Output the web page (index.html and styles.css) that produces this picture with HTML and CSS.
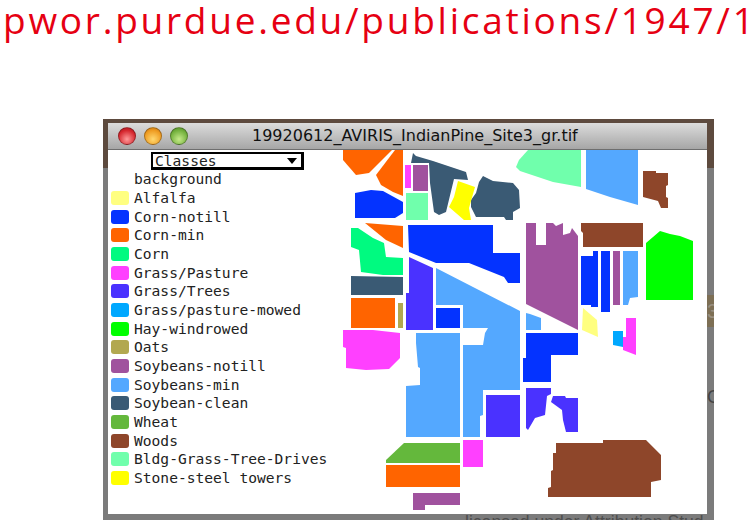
FILE: index.html
```html
<!DOCTYPE html>
<html lang="en">
<head>
<meta charset="utf-8">
<title>19920612_AVIRIS_IndianPine_Site3_gr.tif</title>
<link rel="stylesheet" href="styles.css">
</head>
<body>
<header class="note"><span class="note-text">pwor.purdue.edu/publications/1947/1</span></header>
<section class="screen">
  <span class="ghost-patch">3)</span>
  <span class="ghost-letter">C</span>
  <div class="window">
    <div class="titlebar">
      <div class="lights">
        <span class="light light-red"></span>
        <span class="light light-amber"></span>
        <span class="light light-green"></span>
      </div>
      <div class="title">19920612_AVIRIS_IndianPine_Site3_gr.tif</div>
    </div>
    <div class="content">
      <div class="legend">
        <div class="select"><span>Classes</span><span class="caret"></span></div>
        <div class="row"><span class="swatch"></span>background</div>
        <div class="row"><span class="swatch c-alfalfa"></span>Alfalfa</div>
        <div class="row"><span class="swatch c-notill"></span>Corn-notill</div>
        <div class="row"><span class="swatch c-cornmin"></span>Corn-min</div>
        <div class="row"><span class="swatch c-corn"></span>Corn</div>
        <div class="row"><span class="swatch c-pasture"></span>Grass/Pasture</div>
        <div class="row"><span class="swatch c-trees"></span>Grass/Trees</div>
        <div class="row"><span class="swatch c-mowed"></span>Grass/pasture-mowed</div>
        <div class="row"><span class="swatch c-hay"></span>Hay-windrowed</div>
        <div class="row"><span class="swatch c-oats"></span>Oats</div>
        <div class="row"><span class="swatch c-soynotill"></span>Soybeans-notill</div>
        <div class="row"><span class="swatch c-soymin"></span>Soybeans-min</div>
        <div class="row"><span class="swatch c-soyclean"></span>Soybean-clean</div>
        <div class="row"><span class="swatch c-wheat"></span>Wheat</div>
        <div class="row"><span class="swatch c-woods"></span>Woods</div>
        <div class="row"><span class="swatch c-bldg"></span>Bldg-Grass-Tree-Drives</div>
        <div class="row"><span class="swatch c-stone"></span>Stone-steel towers</div>
      </div>
      <svg class="map" viewBox="340 150 367 364" width="367" height="364" aria-label="Indian Pines class map">
        <g class="f-cornmin">
          <polygon points="343,150 392,150 369,173 356,175 343,160"/>
          <polygon points="395,150 403,150 403,196 393,192 381,185 376,175"/>
          <polygon points="365,223 403,226 403,248 386,240"/>
          <polygon points="351,298 395,298 395,328 351,328"/>
          <polygon points="386,465 460,465 460,487 386,487"/>
        </g>
        <g class="f-pasture">
          <polygon points="405,165 411,165 411,188 405,188"/>
          <polygon points="343,330 373,330 400,333 400,358 389,369 366,370 346,368 346,348 343,347"/>
          <polygon points="463,440 483,440 483,467 463,467"/>
          <polygon points="626,318 636,318 636,355 623,350 623,337 626,337"/>
        </g>
        <g class="f-soynotill">
          <polygon points="413,165 428,165 428,191 413,191"/>
          <polygon points="413,493 460,493 460,505 425,505 425,510 413,510"/>
          <polygon points="526,223 536,223 536,245 546,245 546,223 553,223 556,226 563,223 563,235 570,233 572,228 578,236 578,330 526,304"/>
          <polygon points="613,251 620,251 620,305 613,305"/>
        </g>
        <g class="f-bldg">
          <polygon points="406,193 428,193 428,220 406,220"/>
          <polygon points="528,150 581,150 581,187 553,182 520,171 516,167 519,160"/>
        </g>
        <g class="f-notill">
          <polygon points="355,193 371,190 383,191 403,202 403,213 395,218 355,218"/>
          <polygon points="408,225 493,225 493,253 520,253 520,283 508,283 504,277 469,263 436,263 409,252"/>
          <polygon points="436,308 460,308 460,328 436,328"/>
          <polygon points="526,333 578,333 578,355 551,355 551,382 523,382 523,358 526,358"/>
          <polygon points="581,256 593,256 593,251 598,251 598,307 591,307 591,305 581,305"/>
          <polygon points="601,251 610,251 610,312 601,312"/>
        </g>
        <g class="f-soyclean">
          <polygon points="413,153 416,156 433,161 466,172 468,180 454,179 446,212 439,215 434,212 430,183 429,163 411,163"/>
          <polygon points="483,176 493,181 513,183 519,190 520,208 513,212 513,220 506,220 504,217 476,217 471,207 471,200 476,193 479,182"/>
          <polygon points="351,276 403,277 403,295 351,295"/>
        </g>
        <polygon class="f-stone" points="458,181 475,187 469,208 471,220 464,220 449,207 454,197"/>
        <polygon class="f-corn" points="351,228 358,228 373,238 384,243 386,257 403,258 403,275 383,275 361,272 359,250 351,247"/>
        <polygon class="f-oats" points="398,303 403,303 403,328 398,328"/>
        <g class="f-trees">
          <polygon points="409,257 433,268 433,330 406,330 406,293 409,293"/>
          <polygon points="486,395 520,395 520,437 486,437"/>
          <polygon points="526,388 551,388 551,394 547,396 545,415 535,418 528,430 526,428"/>
          <polygon points="553,396 565,396 566,398 578,398 578,432 566,432 563,420 562,410 551,402"/>
        </g>
        <g class="f-soymin">
          <polygon points="436,268 520,311 520,390 483,390 483,415 480,416 480,437 463,437 463,345 483,345 485,333 488,328 463,328 463,305 436,305"/>
          <polygon points="416,333 460,333 460,437 406,437 406,386 420,385 420,368 418,367 416,343"/>
          <polygon points="586,150 638,150 638,205 610,197 586,189"/>
          <polygon points="623,251 638,251 638,297 630,298 628,305 623,305"/>
          <polygon points="526,313 530,314 541,318 541,330 526,330"/>
        </g>
        <polygon class="f-wheat" points="404,443 460,443 460,463 386,463 386,460"/>
        <g class="f-woods">
          <polygon points="643,171 656,171 656,173 668,173 668,185 666,186 666,197 668,198 668,208 661,208 658,201 643,197"/>
          <polygon points="581,223 643,223 643,247 583,247 583,233 581,231"/>
          <polygon points="556,443 603,443 603,440 646,440 661,455 661,480 651,482 651,497 548,497 548,488 551,487 551,471 553,470 553,453 556,453"/>
        </g>
        <polygon class="f-hay" points="646,243 660,231 670,234 680,236 693,241 693,300 646,300"/>
        <polygon class="f-alfalfa" points="583,308 597,320 598,337 582,330"/>
        <polygon class="f-mowed" points="613,331 623,331 623,347 613,345"/>
      </svg>
    </div>
  </div>
  <div class="credit">licensed under Attribution Stud</div>
</section>
</body>
</html>
```
FILE: styles.css
```css
* { box-sizing: border-box; }
html, body { margin: 0; padding: 0; }
body { width: 756px; height: 520px; overflow: hidden; background: #fff; font-family: "DejaVu Sans Mono", monospace; }

.note { height: 119px; overflow: hidden; white-space: nowrap; padding-left: 3px; }
.note-text { display: block; font-family: "Open Sans", sans-serif; font-weight: 400; font-size: 37px; line-height: 40px; letter-spacing: 2.75px; color: #e60012; }

.screen { position: relative; width: 611px; height: 401px; margin-left: 103px; padding: 4px 7px 0 5px; background: linear-gradient(#5d4a3e 0, #5d4a3e 49px, #7b7b7b 49px); }
.ghost-patch { position: absolute; left: 604px; top: 176px; width: 7px; height: 32px; overflow: hidden; background: #7d6f55; color: #9a9080; font: 20px/32px "Liberation Sans", sans-serif; }
.ghost-letter { position: absolute; left: 604px; top: 267px; width: 7px; overflow: hidden; color: #444; font: 18px/22px "Liberation Sans", sans-serif; }

.window { width: 599px; }
.titlebar { display: flex; align-items: center; height: 27px; position: relative; background: linear-gradient(#dcdcdc, #a6a6a6); border-bottom: 1px solid #6e6e6e; }
.lights { display: flex; gap: 8px; padding-left: 10px; }
.light { width: 18px; height: 18px; border-radius: 50%; border: 1px solid rgba(0,0,0,.3); }
.light-red { background: radial-gradient(circle at 50% 70%, #ff9a9a, #d4252c 65%, #a01a20); }
.light-amber { background: radial-gradient(circle at 50% 70%, #ffd870, #ee9a20 65%, #b86c10); }
.light-green { background: radial-gradient(circle at 50% 70%, #c6ea8a, #72b03c 65%, #4c8024); }
.title { margin-left: 64px; font: 16px/20px "DejaVu Sans", sans-serif; color: #111; white-space: nowrap; }

.content { display: flex; height: 364px; background: #fff; }
.legend { width: 232px; padding: 2px 0 0 3px; font-size: 14.6px; color: #222; white-space: nowrap; }
.select { display: flex; justify-content: space-between; align-items: center; width: 153px; height: 18px; margin-left: 40px; padding: 0 4px 0 2px; background: #fff; border: 2px solid #000; border-right-width: 3px; border-bottom-width: 3px; line-height: 14px; }
.caret { width: 0; height: 0; border-left: 5.5px solid transparent; border-right: 5.5px solid transparent; border-top: 6px solid #000; }
.row { display: flex; align-items: center; gap: 5px; height: 18.67px; line-height: 18px; }
.swatch { width: 18px; height: 14px; border-radius: 3px; flex: none; }
.map { display: block; flex: none; }

.c-alfalfa, .f-alfalfa { background: #ffff80; fill: #ffff80; }
.c-notill, .f-notill { background: #0433ff; fill: #0433ff; }
.c-cornmin, .f-cornmin { background: #ff6400; fill: #ff6400; }
.c-corn, .f-corn { background: #00fa80; fill: #00fa80; }
.c-pasture, .f-pasture { background: #ff40ff; fill: #ff40ff; }
.c-trees, .f-trees { background: #4a32ff; fill: #4a32ff; }
.c-mowed, .f-mowed { background: #00a8ff; fill: #00a8ff; }
.c-hay, .f-hay { background: #00ff00; fill: #00ff00; }
.c-oats, .f-oats { background: #b2a850; fill: #b2a850; }
.c-soynotill, .f-soynotill { background: #a0529e; fill: #a0529e; }
.c-soymin, .f-soymin { background: #54a8ff; fill: #54a8ff; }
.c-soyclean, .f-soyclean { background: #3a5a74; fill: #3a5a74; }
.c-wheat, .f-wheat { background: #64b83c; fill: #64b83c; }
.c-woods, .f-woods { background: #8e462a; fill: #8e462a; }
.c-bldg, .f-bldg { background: #70ffac; fill: #70ffac; }
.c-stone, .f-stone { background: #ffff00; fill: #ffff00; }

.credit { height: 6px; padding-left: 357px; overflow: hidden; white-space: nowrap; font: 17.6px/16px "Liberation Sans", sans-serif; color: #4e4e4e; }
```
